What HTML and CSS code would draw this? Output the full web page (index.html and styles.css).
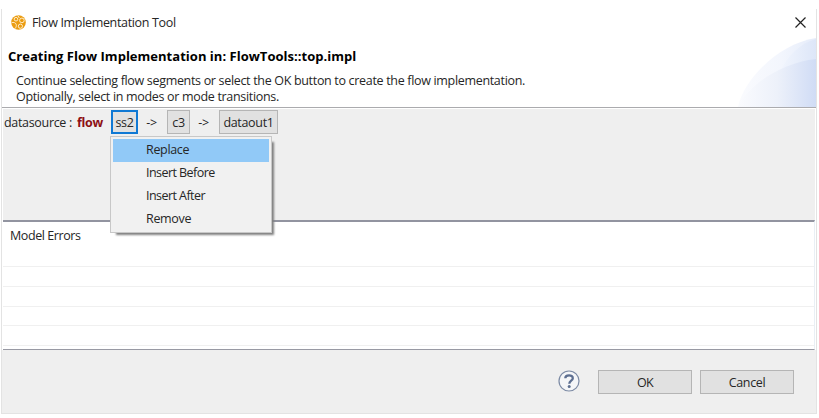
FILE: index.html
```html
<!DOCTYPE html>
<html lang="en">
<head>
<meta charset="utf-8">
<title>Flow Implementation Tool</title>
<link rel="stylesheet" href="styles.css">
</head>
<body>
<main class="dialog">
  <header class="titlebar">
    <svg class="app-icon" width="15" height="15" viewBox="0 0 15 15">
      <circle cx="7.5" cy="7.5" r="7.3" fill="#eb9c10"/>
      <g fill="none" stroke="#fff4dc" stroke-width=".9">
        <circle cx="5" cy="4.200" r="1.800"/>
        <circle cx="10.900" cy="5.400" r="2.300"/>
        <circle cx="9.400" cy="11.200" r="2.100"/>
        <path d="M.5 7.700c2-.8 4 0 4.600 1.500s0 3.300-1.200 4.500M6.800.5l1.500 2.500"/>
      </g>
    </svg>
    <h1 class="title">Flow Implementation Tool</h1>
    <svg class="close" width="11" height="11" viewBox="0 0 11 11"><path d="M.5 .5l10 10M10.500 .5l-10 10" stroke="#222" stroke-width="1.200"/></svg>
  </header>
  <section class="banner">
    <div class="banner-text">
      <h2 class="heading">Creating Flow Implementation in: FlowTools::top.impl</h2>
      <p class="hint">Continue selecting flow segments or select the OK button to create the flow implementation.</p>
      <p class="hint hint-second">Optionally, select in modes or mode transitions.</p>
    </div>
    <svg class="swoosh" width="78" height="69" viewBox="0 0 78 69">
      <defs>
        <linearGradient id="outer"><stop offset="0" stop-color="#fafbfe"/><stop offset=".55" stop-color="#f3f6fd"/><stop offset="1" stop-color="#e5ecfa"/></linearGradient>
        <linearGradient id="middle"><stop offset="0" stop-color="#f1f5fd"/><stop offset="1" stop-color="#dde6f8"/></linearGradient>
        <linearGradient id="inner"><stop offset="0" stop-color="#fafbfe"/><stop offset=".5" stop-color="#edf1fa"/><stop offset="1" stop-color="#d0dcf5"/></linearGradient>
      </defs>
      <path d="M0 69C5 43 39 6 78 0v69z" fill="url(#outer)"/>
      <path d="M43 32C50 18 62 5 78 1v34H43z" fill="url(#middle)"/>
      <path d="M0 69C9 49 41 25 78 21v48z" fill="url(#inner)"/>
    </svg>
  </section>
  <section class="flow-panel">
    <span class="source">datasource<span class="colon">:</span></span>
    <span class="keyword">flow</span>
    <div class="segment-anchor">
      <button class="segment selected">ss2</button>
      <ul class="menu">
        <li class="item active">Replace</li>
        <li class="item">Insert Before</li>
        <li class="item">Insert After</li>
        <li class="item remove">Remove</li>
      </ul>
    </div>
    <span class="arrow">-&gt;</span>
    <button class="segment c3">c3</button>
    <span class="arrow">-&gt;</span>
    <button class="segment dataout">dataout1</button>
  </section>
  <section class="errors">
    <div class="errors-head">Model Errors</div>
    <div class="row"></div>
    <div class="row"></div>
    <div class="row short"></div>
    <div class="row"></div>
    <div class="row last"></div>
  </section>
  <footer class="actions">
    <svg class="help" width="22" height="22" viewBox="0 0 22 22">
      <circle cx="11" cy="11" r="10" fill="#f5f6f8" stroke="#7d8ba5" stroke-width="1.200"/>
      <path d="M7.300 8.300C7.300 4.300 14.800 4.300 14.800 8.200c0 2.500-3.500 2.600-3.500 5.600" fill="none" stroke="#5d6f91" stroke-width="2.300"/>
      <circle cx="11.200" cy="16.600" r="1.500" fill="#5d6f91"/>
    </svg>
    <button class="action ok">OK</button>
    <button class="action cancel">Cancel</button>
  </footer>
</main>
</body>
</html>
```
FILE: styles.css
```css
* { box-sizing: border-box; }
body {
  margin: 0;
  background: #fff;
  color: #262626;
  font: 12.5px/16px "Open Sans", "Noto Sans", sans-serif;
  letter-spacing: -0.32px;
  overflow: hidden;
}
h1, h2, p, ul { margin: 0; padding: 0; font-weight: 400; }
button { font: inherit; letter-spacing: inherit; color: inherit; border-radius: 0; padding: 0; }
.dialog {
  width: 816px;
  height: 405px;
  margin: 9px 0 0 1px;
  border: 1px solid #e3e3e3;
  border-top: 0;
  display: flex;
  flex-direction: column;
}
.titlebar { height: 29px; display: flex; align-items: center; padding: 0 9px 0 9px; }
.app-icon { margin-top: -3px; }
.title { margin: -1px 0 0 6px; font-size: 12.5px; letter-spacing: -0.33px; }
.close { margin: -3px 1px 0 auto; }
.banner {
  height: 70px;
  display: flex;
  justify-content: space-between;
  align-items: flex-end;
  border-bottom: 1px solid #ababae;
}
.banner-text { align-self: flex-start; padding: 10px 0 0 6px; }
.heading { font-size: 13px; font-weight: 700; letter-spacing: 0.02px; color: #000; }
.hint { margin: 9px 0 0 8px; white-space: nowrap; }
.hint-second { margin-top: 0; }
.flow-panel {
  height: 111px;
  margin: 1px 1px 0;
  padding: 1px 0 0 1px;
  background: #efefef;
  display: flex;
  align-items: flex-start;
  line-height: 25px;
}
.source { width: 73px; white-space: nowrap; }
.colon { margin-left: 3px; }
.keyword { width: 34px; font-weight: 700; color: #8d1015; }
.segment-anchor { position: relative; }
.segment {
  display: block;
  height: 24px;
  border: 1px solid #b5b5b5;
  background: #e1e1e1;
  line-height: 22px;
  padding-top: 1px;
}
.selected { width: 27px; border: 2px solid #1079d4; line-height: 21px; padding-top: 0; }
.arrow { width: 29px; text-align: center; padding-right: 2px; }
.c3 { width: 23px; }
.dataout { width: 59px; }
.menu {
  position: absolute;
  z-index: 1;
  top: 26px;
  left: -1px;
  width: 162px;
  height: 97px;
  padding: 2px;
  list-style: none;
  background: #f1f1f1;
  border: 1px solid #c8c8c8;
  box-shadow: 4px 4px 2px -2px #808080;
}
.item { height: 23px; line-height: 22px; padding-left: 33px; letter-spacing: -0.55px; }
.active, .remove { letter-spacing: -0.33px; }
.active { background: #91c9f7; }
.errors {
  height: 130px;
  margin: 0 1px;
  border-top: 2px solid #9294a0;
  border-bottom: 1px solid #9899a3;
  border-right: 1px solid #e9eff5;
}
.errors-head { height: 45px; padding: 6px 0 0 7px; letter-spacing: -0.42px; border-bottom: 1px solid #f0f0f0; }
.row { height: 20px; border-bottom: 1px solid #f0f0f0; }
.short { height: 19px; }
.last { height: 3px; border: 0; }
.actions {
  flex: 1;
  background: #efefef;
  display: flex;
  align-items: flex-start;
  justify-content: flex-end;
  padding: 20px 22px 0 0;
}
.help { margin: 0 18px 0 0; }
.action { width: 94px; height: 24px; border: 1px solid #b5b5b5; background: #e1e1e1; line-height: 22px; padding-top: 1px; }
.ok { letter-spacing: -0.7px; }
.cancel { margin-left: 8px; }
```
